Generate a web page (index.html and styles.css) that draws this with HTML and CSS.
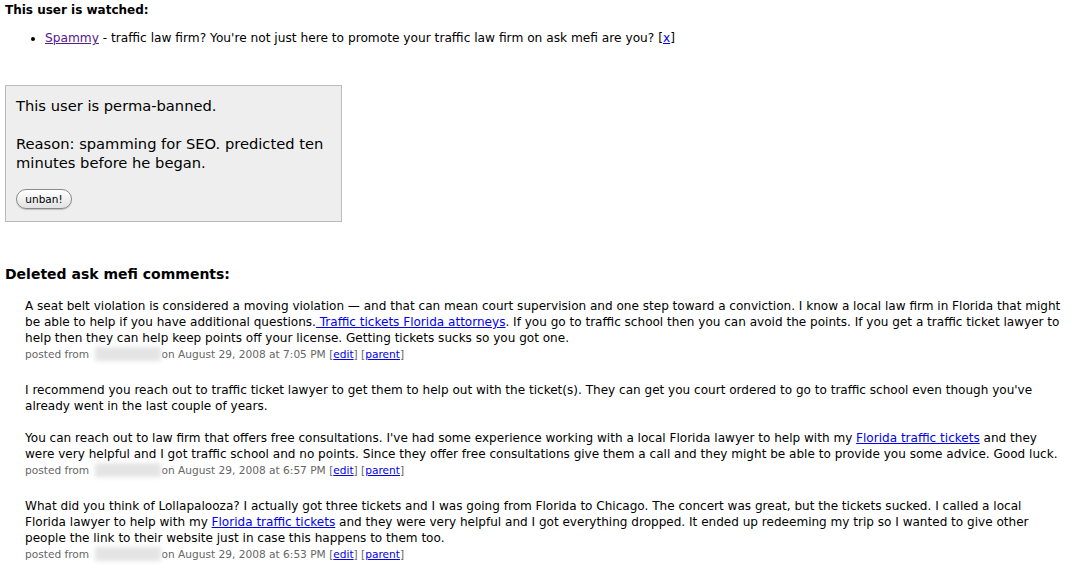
FILE: index.html
```html
<!DOCTYPE html>
<html>
<head>
<meta charset="utf-8">
<link rel="stylesheet" href="styles.css">
</head>
<body>
<h3 class="sec-title">This user is watched:</h3>
<ul class="watch-list">
  <li><a href="#" class="visited">Spammy</a> - traffic law firm? You're not just here to promote your traffic law firm on ask mefi are you? [<a href="#">x</a>]</li>
</ul>

<div class="ban-box">
  <p>This user is perma-banned.</p>
  <p>Reason: spamming for SEO. predicted ten minutes before he began.</p>
  <button class="unban">unban!</button>
</div>

<h2 class="del-title">Deleted ask mefi comments:</h2>

<div class="comments">
  <div class="comment">
    <div class="ctext">A seat belt violation is considered a moving violation — and that can mean court supervision and one step toward a conviction. I know a local law firm in Florida that might be able to help if you have additional questions.<a href="#"> Traffic tickets Florida attorneys</a>. If you go to traffic school then you can avoid the points. If you get a traffic ticket lawyer to help then they can help keep points off your license. Getting tickets sucks so you got one.</div>
    <div class="posted">posted from <span class="blur"></span>on August 29, 2008 at 7:05 PM [<a href="#">edit</a>] [<a href="#">parent</a>]</div>
  </div>
  <div class="comment">
    <div class="ctext">I recommend you reach out to traffic ticket lawyer to get them to help out with the ticket(s). They can get you court ordered to go to traffic school even though you've already went in the last couple of years.<br><br>You can reach out to law firm that offers free consultations. I've had some experience working with a local Florida lawyer to help with my <a href="#">Florida traffic tickets</a> and they were very helpful and I got traffic school and no points. Since they offer free consultations give them a call and they might be able to provide you some advice. Good luck.</div>
    <div class="posted">posted from <span class="blur"></span>on August 29, 2008 at 6:57 PM [<a href="#">edit</a>] [<a href="#">parent</a>]</div>
  </div>
  <div class="comment">
    <div class="ctext">What did you think of Lollapalooza? I actually got three tickets and I was going from Florida to Chicago. The concert was great, but the tickets sucked. I called a local Florida lawyer to help with my <a href="#">Florida traffic tickets</a> and they were very helpful and I got everything dropped. It ended up redeeming my trip so I wanted to give other people the link to their website just in case this happens to them too.</div>
    <div class="posted">posted from <span class="blur"></span>on August 29, 2008 at 6:53 PM [<a href="#">edit</a>] [<a href="#">parent</a>]</div>
  </div>
</div>
</body>
</html>
```

FILE: styles.css
```css
html, body {
  margin: 0;
  padding: 0;
  background: #fff;
}
body {
  padding: 0 5px;
  font-family: "DejaVu Sans", Verdana, sans-serif;
  color: #000;
}
a {
  color: #0000ee;
}
a.visited {
  color: #551a8b;
}
.sec-title {
  margin: 0;
  padding-top: 2px;
  font-size: 12px;
  line-height: 16px;
  font-weight: bold;
}
.watch-list {
  margin: 12px 0 0;
  padding-left: 40px;
  font-size: 12.2px;
  line-height: 16px;
}
.ban-box {
  margin-top: 39px;
  width: 315px;
  background: #eeeeee;
  border: 1px solid #bbbbbb;
  padding: 10px 10px 12px;
  font-size: 14.7px;
  line-height: 19px;
}
.ban-box p {
  margin: 0 0 19px;
}
.unban {
  display: block;
  font-family: "DejaVu Sans", sans-serif;
  font-size: 10.5px;
  line-height: 14px;
  height: 20px;
  background: linear-gradient(#ffffff, #e2e2e2);
  border: 1px solid #8a8a8a;
  border-radius: 10px;
  padding: 2px 0;
  margin: -2px 0 0;
  width: 56px;
  color: #000;
  box-shadow: 0 1px 1px rgba(0,0,0,0.2);
}
.del-title {
  margin: 43px 0 0;
  font-size: 14px;
  line-height: 18px;
  font-weight: bold;
}
.comments {
  margin-top: 15px;
  padding-left: 20px;
  padding-right: 16px;
}
.comment {
  margin-bottom: 20px;
}
.ctext {
  font-size: 12.06px;
  line-height: 16px;
}
.posted {
  font-size: 10.6px;
  line-height: 16px;
  color: #666;
}
.posted .blur {
  display: inline-block;
  width: 66px;
  height: 14px;
  vertical-align: -3px;
  background: #e4e4e4;
  filter: blur(2px);
  margin-left: 2px;
  margin-right: 1px;
}
```
